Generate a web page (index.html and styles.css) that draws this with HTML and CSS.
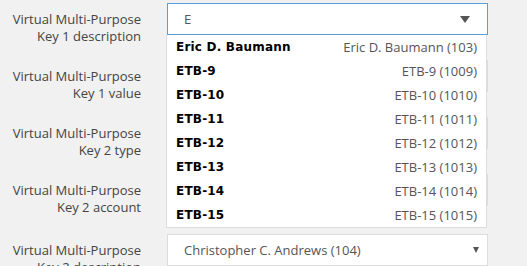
FILE: index.html
```html
<!DOCTYPE html>
<html lang="en">
<head>
  <meta charset="UTF-8">
  <title>Virtual Multi-Purpose Keys</title>
  <link rel="stylesheet" href="styles.css">
</head>
<body>
  <div class="form">
    <div class="row">
      <label class="label">Virtual Multi-Purpose<br>Key 1 description</label>
      <div class="field">
        <div class="combo focused">
          <span class="value">E</span>
          <span class="arrow big"></span>
        </div>
        <!-- open autocomplete list -->
        <ul class="dropdown">
          <li><b>Eric D. Baumann</b><span>Eric D. Baumann (103)</span></li>
          <li><b>ETB-9</b><span>ETB-9 (1009)</span></li>
          <li><b>ETB-10</b><span>ETB-10 (1010)</span></li>
          <li><b>ETB-11</b><span>ETB-11 (1011)</span></li>
          <li><b>ETB-12</b><span>ETB-12 (1012)</span></li>
          <li><b>ETB-13</b><span>ETB-13 (1013)</span></li>
          <li><b>ETB-14</b><span>ETB-14 (1014)</span></li>
          <li><b>ETB-15</b><span>ETB-15 (1015)</span></li>
        </ul>
      </div>
    </div>
    <div class="row">
      <label class="label">Virtual Multi-Purpose<br>Key 1 value</label>
      <div class="field"><div class="combo"></div></div>
    </div>
    <div class="row">
      <label class="label">Virtual Multi-Purpose<br>Key 2 type</label>
      <div class="field"><div class="combo"></div></div>
    </div>
    <div class="row">
      <label class="label">Virtual Multi-Purpose<br>Key 2 account</label>
      <div class="field"><div class="combo"></div></div>
    </div>
    <div class="row last">
      <label class="label">Virtual Multi-Purpose<br>Key 2 description</label>
      <div class="field">
        <div class="combo">
          <span class="value">Christopher C. Andrews (104)</span>
          <span class="arrow"></span>
        </div>
      </div>
    </div>
  </div>
</body>
</html>
```

FILE: styles.css
```css
body {
  margin: 0;
  background: #f1f1f1;
  font-family: "Open Sans", sans-serif;
  font-size: 13px;
  color: #444;
}
.form {
  padding-top: 3px;
}
.row {
  display: grid;
  grid-template-columns: 141px 321px;
  column-gap: 26px;
  height: 57px;
}
.row.last {
  margin-top: 3px;
}
.label {
  text-align: right;
  line-height: 17px;
  padding-top: 8px;
}
.field {
  position: relative;
}
.combo {
  box-sizing: border-box;
  height: 32px;
  background: #fff;
  border: 1px solid #ddd;
  display: flex;
  align-items: center;
  justify-content: space-between;
  padding: 0 8px 0 16px;
  color: #555;
}
.combo.focused {
  border-color: #5b9dd9;
  padding-right: 17px;
}
.arrow {
  width: 0;
  height: 0;
  border-left: 3px solid transparent;
  border-right: 3px solid transparent;
  border-top: 6px solid #555;
}
.arrow.big {
  border-left-width: 5px;
  border-right-width: 5px;
  border-top-width: 7px;
}
.dropdown {
  position: absolute;
  top: 32px;
  left: -1px;
  width: 321px;
  box-sizing: border-box;
  margin: 0;
  padding: 0;
  list-style: none;
  background: #fff;
  border: 1px solid #ddd;
  border-top: none;
  z-index: 2;
}
.dropdown li {
  display: flex;
  justify-content: space-between;
  align-items: center;
  height: 24px;
  padding: 0 9px 0 9px;
}
.dropdown b {
  font-family: "DejaVu Sans", sans-serif;
  font-size: 12px;
  letter-spacing: 0.2px;
  color: #000;
}
.dropdown span {
  color: #555;
}
```
